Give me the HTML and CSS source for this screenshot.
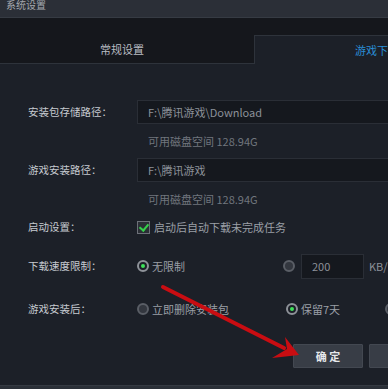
FILE: index.html
```html
<!DOCTYPE html>
<html lang="zh-CN">
<head>
  <meta charset="UTF-8" />
  <title>系统设置</title>
  <link rel="stylesheet" href="styles.css">
</head>
<body>
  <div class="dialog">
    <div class="titlebar"><span>系统设置</span></div>
    <div class="tabs">
      <div class="tab">常规设置</div>
      <div class="tab active">游戏下载设置</div>
    </div>
    <div class="panel">
      <div class="row">
        <div class="label">安装包存储路径：</div>
        <div class="field">
          <div class="input">F:\腾讯游戏\Download</div>
          <div class="hint">可用磁盘空间 128.94G</div>
        </div>
      </div>
      <div class="row next">
        <div class="label">游戏安装路径：</div>
        <div class="field">
          <div class="input">F:\腾讯游戏</div>
          <div class="hint">可用磁盘空间 128.94G</div>
        </div>
      </div>
      <div class="row line startup">
        <div class="label">启动设置：</div>
        <span class="check"></span>
        <span class="opt-text">启动后自动下载未完成任务</span>
      </div>
      <div class="row line speed">
        <div class="label">下载速度限制：</div>
        <div class="option wide"><span class="radio on"></span><span class="opt-text">无限制</span></div>
        <span class="radio"></span>
        <div class="input small">200</div>
        <span class="unit">KB/s</span>
      </div>
      <div class="row line after">
        <div class="label">游戏安装后：</div>
        <div class="option wide2"><span class="radio"></span><span class="opt-text">立即删除安装包</span></div>
        <div class="option mid"><span class="radio on"></span><span class="opt-text">保留7天</span></div>
        <div class="option"><span class="radio"></span><span class="opt-text">永久保留</span></div>
      </div>
      <div class="actions">
        <button class="btn">确 定</button>
        <button class="btn">取 消</button>
      </div>
    </div>
    <div class="footer"></div>
  </div>
  <svg class="arrow" width="388" height="389" viewBox="0 0 388 389">
    <line x1="163" y1="287" x2="284" y2="348" stroke="#c90d12" stroke-width="4" stroke-linecap="round" />
    <polygon points="299,355 285,337 287,349 272,358" fill="#c90d12" />
  </svg>
</body>
</html>
```

FILE: styles.css
```css
body {
  margin: 0;
  width: 388px;
  height: 389px;
  overflow: hidden;
  position: relative;
  background: #1c2028;
  font-family: "Noto Sans CJK SC", "Noto Sans", sans-serif;
  font-size: 11px;
}
.dialog {
  width: 600px;
}
.titlebar {
  height: 17px;
  background: #2b2f37;
  border-bottom: 1px solid #363b43;
  overflow: hidden;
}
.titlebar span {
  display: block;
  margin: -3px 0 0 6px;
  font-size: 10px;
  line-height: 16px;
  color: #a4a8ae;
}
.tabs {
  height: 46px;
  display: flex;
  align-items: flex-end;
  background: #15171c;
}
.tab {
  flex-shrink: 0;
  width: 154px;
  height: 28px;
  padding-left: 100px;
  line-height: 28px;
  color: #b9bdc3;
  border-bottom: 1px solid #2e333b;
}
.tab.active {
  width: 200px;
  height: 28px;
  padding-left: 100px;
  background: #1c2028;
  color: #2a8ed6;
  border-bottom: none;
  border-top: 1px solid #2e333b;
  border-left: 1px solid #2e333b;
}
.panel {
  height: 285px;
  padding: 36px 0 0 28px;
  background: #1c2028;
}
.row {
  display: flex;
  align-items: flex-start;
}
.row.line {
  align-items: center;
  height: 20px;
}
.row.next {
  margin-top: 10px;
}
.label {
  width: 109px;
  flex-shrink: 0;
  font-size: 10.5px;
  line-height: 24px;
  color: #c6cad0;
}
.field {
  display: flex;
  flex-direction: column;
}
.input {
  box-sizing: border-box;
  width: 400px;
  height: 24px;
  padding-left: 10px;
  line-height: 22px;
  background: #15181e;
  border: 1px solid #2a2e36;
  color: #8c9199;
}
.input.small {
  flex-shrink: 0;
  width: 63px;
  height: 25px;
  margin-left: 6px;
  line-height: 23px;
}
.hint {
  margin-top: 10px;
  padding-left: 11px;
  line-height: 14px;
  color: #71767e;
}
.startup {
  margin-top: 11px;
}
.speed {
  margin-top: 19px;
  height: 25px;
}
.after {
  margin-top: 23px;
}
.check {
  box-sizing: border-box;
  width: 13px;
  height: 13px;
  border: 1px solid #6c7078;
  background: #2a2e35;
  position: relative;
}
.check::after {
  content: "";
  position: absolute;
  left: 3px;
  top: 0px;
  width: 4px;
  height: 7px;
  border: solid #36d04a;
  border-width: 0 2px 2px 0;
  transform: rotate(40deg);
}
.opt-text {
  margin-left: 4px;
  color: #9a9fa6;
  white-space: nowrap;
}
.option {
  display: flex;
  align-items: center;
  flex-shrink: 0;
}
.option.wide {
  width: 146px;
}
.option.wide2 {
  width: 149px;
}
.option.mid {
  width: 99px;
}
.option .opt-text {
  margin-left: 3px;
}
.radio {
  box-sizing: border-box;
  width: 12px;
  height: 12px;
  border-radius: 50%;
  border: 2px solid #5a5e66;
  background: #33373f;
  position: relative;
  flex-shrink: 0;
}
.radio.on {
  border-color: #8e9299;
  background: #1c2028;
}
.radio.on::after {
  content: "";
  position: absolute;
  left: 2px;
  top: 2px;
  width: 4px;
  height: 4px;
  border-radius: 50%;
  background: #3ee05a;
}
.unit {
  margin-left: 5px;
  color: #8c9199;
  white-space: nowrap;
}
.actions {
  display: flex;
  gap: 6px;
  margin-top: 25px;
  padding-left: 265px;
}
.btn {
  width: 70px;
  height: 24px;
  padding: 0;
  background: #383d46;
  border: 1px solid #434851;
  border-radius: 1px;
  color: #e6e8eb;
  font-family: inherit;
  font-size: 11px;
  font-weight: bold;
}
.footer {
  height: 30px;
  background: #2b3038;
  border-top: 1px solid #353a42;
}
.arrow {
  position: absolute;
  top: 0;
  left: 0;
  pointer-events: none;
}
```
